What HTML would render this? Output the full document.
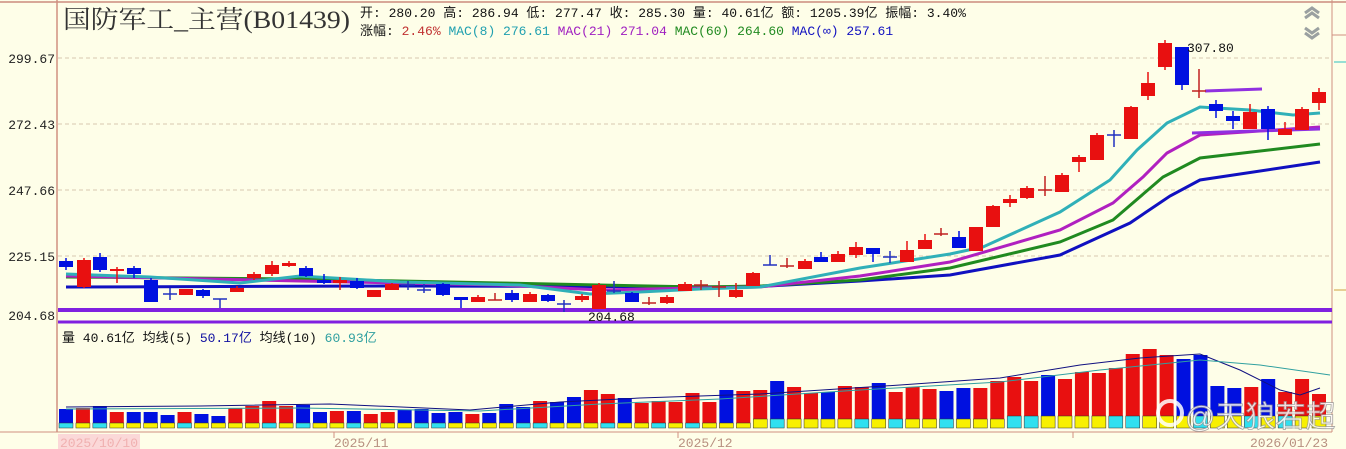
<!DOCTYPE html>
<html><head><meta charset="utf-8"><style>
html,body{margin:0;padding:0;background:#fefee8;}
body{width:1346px;height:449px;overflow:hidden;position:relative;font-family:"Liberation Mono","Noto Sans CJK SC",monospace;}
svg{position:absolute;left:0;top:0}
</style></head><body>
<svg id="s" width="1346" height="449" xmlns="http://www.w3.org/2000/svg">
<rect width="1346" height="449" fill="#fefee8"/>
<line x1="0" y1="2" x2="1346" y2="2" stroke="#d8a898" stroke-width="2"/>
<line x1="57" y1="0" x2="57" y2="432" stroke="#d09080" stroke-width="1.5"/>
<line x1="1332" y1="0" x2="1332" y2="432" stroke="#d09080" stroke-width="1"/>
<line x1="1332" y1="35" x2="1346" y2="35" stroke="#d09080"/>
<line x1="1334" y1="62" x2="1346" y2="62" stroke="#30c0c0"/>
<line x1="1334" y1="290" x2="1346" y2="290" stroke="#d0a040"/>
<line x1="0" y1="432" x2="1332" y2="432" stroke="#d09080"/>
<g stroke="#d8c8b0" stroke-dasharray="4,3">
<line x1="58" y1="58" x2="1332" y2="58"/><line x1="58" y1="124" x2="1332" y2="124"/>
<line x1="58" y1="190" x2="1332" y2="190"/><line x1="58" y1="256" x2="1332" y2="256"/>
</g>
<g font-size="13" fill="#222" text-anchor="end">
<text x="55" y="63">299.67</text><text x="55" y="129">272.43</text><text x="55" y="195">247.66</text>
<text x="55" y="261">225.15</text><text x="55" y="320">204.68</text></g>
<line x1="58" y1="310" x2="1332" y2="310" stroke="#8020e0" stroke-width="4"/>
<line x1="58" y1="322" x2="1332" y2="322" stroke="#8020e0" stroke-width="3"/>
<g id="ma" fill="none" stroke-width="3">
<polyline stroke="#1010c0" points="66,287 400,286 750,287 860,281 950,275 1060,255 1130,223 1170,196 1200,180 1320,162"/>
<polyline stroke="#208a20" points="66,277 300,279 500,283 700,287 760,286 860,280 950,268 1060,242 1113,220 1163,177 1200,158 1320,144"/>
<polyline stroke="#b020c0" points="66,276 300,281 500,285 600,290 700,288 760,287 860,276 950,262 1060,230 1113,203 1143,177 1167,153 1200,135 1320,127"/>
<polyline stroke="#30b0b8" points="66,274 150,277 240,283 300,276 400,282 520,285 590,294 640,292 700,289 760,287 860,268 950,254 983,247 1060,212 1110,180 1137,150 1167,123 1200,107 1250,110 1293,115 1320,113"/>
</g>
<line x1="1205" y1="91" x2="1262" y2="89" stroke="#9030e0" stroke-width="3"/>
<line x1="1192" y1="133" x2="1320" y2="129" stroke="#9030e0" stroke-width="3"/>
<g id="cd"></g>
<g id="vol"></g>
<g font-size="13" fill="#111"><text x="1187" y="52">307.80</text><text x="588" y="321">204.68</text></g>
<text x="62" y="342" font-size="13" fill="#111">量 40.61亿 均线(5) <tspan fill="#1010a0">50.17亿</tspan> 均线(10) <tspan fill="#30a0a0">60.93亿</tspan></text>
<rect x="58" y="434" width="82" height="15" fill="#fbd8d8"/>
<g font-size="13" fill="#b89080">
<text x="60" y="447" fill="#f0b0b0">2025/10/10</text>
<text x="334" y="447">2025/11</text><text x="678" y="447">2025/12</text><text x="1250" y="447">2026/01/23</text></g>
<g stroke="#d09080"><line x1="334" y1="432" x2="334" y2="438"/><line x1="678" y1="432" x2="678" y2="438"/><line x1="1073" y1="432" x2="1073" y2="438"/></g>
<text x="63" y="28" font-size="25" fill="#333" textLength="287" lengthAdjust="spacingAndGlyphs" font-family="Liberation Serif,Noto Serif CJK SC,serif">国防军工_主营(B01439)</text>
<text x="360" y="17" font-size="13" fill="#111">开: 280.20 高: 286.94 低: 277.47 收: 285.30 量: 40.61亿 额: 1205.39亿 振幅: 3.40%</text>
<text x="360" y="35" font-size="13" fill="#111">涨幅: <tspan fill="#c03030">2.46%</tspan> <tspan fill="#20a0b0">MAC(8) 276.61</tspan> <tspan fill="#a020c0">MAC(21) 271.04</tspan> <tspan fill="#208a20">MAC(60) 264.60</tspan> <tspan fill="#1010c0">MAC(∞) 257.61</tspan></text>
<g fill="none" stroke="#9aa0a0" stroke-width="3"><polyline points="1305,13 1312,8 1319,13"/><polyline points="1305,18 1312,13 1319,18"/><polyline points="1305,28 1312,33 1319,28"/><polyline points="1305,33 1312,38 1319,33"/></g>
<g opacity="0.85"><circle cx="1170" cy="413" r="12" fill="none" stroke="#fff" stroke-width="4"/>
<text x="1185" y="427" font-size="30" fill="#fff" stroke="#999" stroke-width="0.8" font-family="Liberation Sans,Noto Sans CJK SC,sans-serif">@天狼若超</text></g>
</svg>
<script>
var R="#e81010",B="#0010e0";
var C=[[66,261,267,258,270,'b'],[84,260,287,258,288,'r'],[100,257,270,253,272,'b'],[117,269,271,267,283,'r'],[134,268,274,266,278,'b'],[151,280,302,278,302,'b'],[170,294,294,288,300,'x'],[186,289,295,289,295,'r'],[203,290,296,289,298,'b'],[220,299,299,299,308,'x'],[237,288,292,286,292,'r'],[254,274,278,272,280,'r'],[272,265,274,261,276,'r'],[289,263,266,261,267,'r'],[306,268,276,266,277,'b'],[324,280,283,274,284,'b'],[340,280,283,277,290,'r'],[357,281,288,278,289,'b'],[374,290,297,290,297,'r'],[392,284,290,283,290,'r'],[408,285,285,281,290,'x'],[424,290,290,284,293,'x'],[443,284,295,283,296,'b'],[461,297,300,297,308,'b'],[478,297,302,295,302,'r'],[495,300,300,293,300,'x'],[512,293,300,290,302,'b'],[530,294,302,292,302,'r'],[548,295,301,294,302,'b'],[564,304,304,300,312,'x'],[582,296,300,294,302,'r'],[599,285,309,283,309,'r'],[614,291,291,281,293,'x'],[632,293,302,292,302,'b'],[649,303,303,297,305,'x'],[667,297,303,295,304,'r'],[685,284,291,282,291,'r'],[701,285,285,280,290,'x'],[719,287,287,281,297,'x'],[736,290,297,283,298,'r'],[753,273,286,272,286,'r'],[770,265,265,255,265,'x'],[787,266,266,258,268,'x'],[805,261,269,259,269,'r'],[821,257,262,252,262,'b'],[838,254,262,251,262,'r'],[856,247,255,242,258,'r'],[873,248,254,248,262,'b'],[890,257,257,251,263,'x'],[907,250,262,241,262,'r'],[925,240,249,234,249,'r'],[941,234,234,228,236,'x'],[959,237,248,231,248,'b'],[976,227,251,227,251,'r'],[993,206,227,205,227,'r'],[1010,199,203,195,207,'r'],[1027,188,198,186,199,'r'],[1045,190,190,176,196,'x'],[1062,175,192,173,192,'r'],[1079,157,162,155,172,'r'],[1097,135,160,133,160,'r'],[1114,135,135,130,147,'x'],[1131,107,139,106,139,'r'],[1148,83,96,72,100,'r'],[1165,43,67,40,70,'r'],[1182,47,85,47,90,'b'],[1199,91,91,69,98,'x'],[1216,104,111,100,118,'b'],[1233,116,121,111,129,'b'],[1250,112,129,104,129,'r'],[1268,109,129,106,140,'b'],[1285,129,135,122,135,'r'],[1302,109,130,107,130,'r'],[1319,92,103,88,110,'r']];
var h='';C.forEach(function(c){var x=c[0],col=c[5]=='b'?B:R;
if(c[5]=='x'){col=['#2030c0','#c02020'][Math.round(x)%2];h+='<line x1="'+x+'" y1="'+c[3]+'" x2="'+x+'" y2="'+c[4]+'" stroke="'+col+'" stroke-width="1.5"/><line x1="'+(x-7)+'" y1="'+c[1]+'" x2="'+(x+7)+'" y2="'+c[1]+'" stroke="'+col+'" stroke-width="1.5"/>';}
else{h+='<line x1="'+x+'" y1="'+c[3]+'" x2="'+x+'" y2="'+c[4]+'" stroke="'+col+'" stroke-width="1.5"/><rect x="'+(x-7)+'" y="'+c[1]+'" width="14" height="'+Math.max(2,c[2]-c[1])+'" fill="'+col+'"/>';}});
document.getElementById('cd').innerHTML=h;
var L=[409,408,406,412,412,412,415,412,414,416,408,406,401,406,405,412,411,411,414,412,410,409,413,412,414,413,404,407,401,402,397,390,394,398,403,401,402,393,402];
var LC="BRBRBBBRBBRRRRBBRBRRBBBBRBBBRBBRRBRRRRR";
var RT=[390,391,390,381,387,393,392,386,387,383,392,387,389,391,388,388,381,377,381,375,379,372,373,368,354,349,355,359,355,386,388,387,379,392,379,394];
var RC="BRRBRRBRRBRRRBBRRRRBRRRRRRRBBBBRBRRR";
var T=L.concat(RT),TC=LC.slice(0,L.length)+RC;
var v='';for(var i=0;i<T.length;i++){var x=66+i*(1319-66)/(T.length-1);var col=TC[i]=='B'?B:R;var bh=(i>55?12:(i>40?9:5));var bc=(i%5==2||i%7==0)?'#30e0f0':'#f8f000';
v+='<rect x="'+(x-7)+'" y="'+T[i]+'" width="14" height="'+(428-T[i])+'" fill="'+col+'"/><rect x="'+(x-7)+'" y="'+(428-bh)+'" width="14" height="'+bh+'" fill="'+bc+'" stroke="#333" stroke-width="0.5"/>';}
v+='<polyline fill="none" stroke="#101080" stroke-width="1" points="66,407 200,406 330,404 470,410 560,402 640,398 760,394 900,385 1000,378 1080,365 1140,358 1200,354 1240,370 1280,390 1300,395 1320,388"/>';
v+='<polyline fill="none" stroke="#30a0a0" stroke-width="1" points="66,409 300,408 480,411 600,404 720,399 860,390 1000,382 1100,370 1200,360 1260,365 1330,375"/>';
document.getElementById('vol').innerHTML=v;
</script>
</body></html>
